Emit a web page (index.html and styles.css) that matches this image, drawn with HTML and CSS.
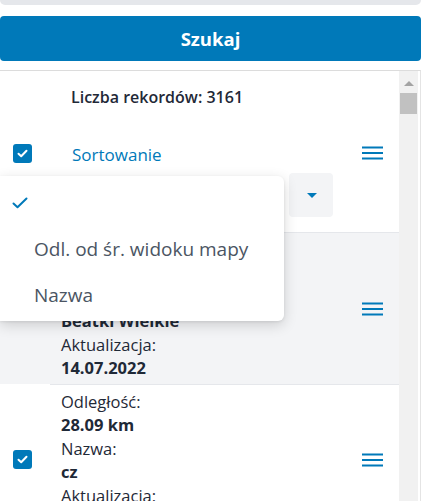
FILE: index.html
```html
<!DOCTYPE html>
<html lang="pl">
<head>
<meta charset="utf-8">
<link rel="stylesheet" href="styles.css">
</head>
<body>
<div class="page">
  <div class="top-bar"></div>
  <button class="search">Szukaj</button>
  <div class="panel">
    <div class="list">
      <div class="count">Liczba rekordów: 3161</div>
      <div class="sort-row">
        <div class="cb-cell"><span class="checkbox"><svg width="19" height="19" viewBox="0 0 19 19"><path d="M5.5 9.8 L8.2 12.3 L13.5 6.8" fill="none" stroke="#fff" stroke-width="2" stroke-linecap="round" stroke-linejoin="round"/></svg></span></div>
        <div class="sort-label">Sortowanie</div>
        <div class="menu-cell"><svg class="burger" width="21" height="14" viewBox="0 0 21 14"><rect x="0" y="0.5" width="21" height="2" fill="#0079b9"/><rect x="0" y="6" width="21" height="2" fill="#0079b9"/><rect x="0" y="11.5" width="21" height="2" fill="#0079b9"/></svg></div>
      </div>
      <div class="select-row">
        <div class="select">
          <div class="select-field"></div>
          <div class="select-toggle"><span class="caret"></span></div>
        </div>
      </div>
      <div class="item gray">
        <div class="cb-cell"><span class="checkbox"><svg width="19" height="19" viewBox="0 0 19 19"><path d="M5.5 9.8 L8.2 12.3 L13.5 6.8" fill="none" stroke="#fff" stroke-width="2" stroke-linecap="round" stroke-linejoin="round"/></svg></span></div>
        <div class="item-body">
          <div class="content">
            <div class="lbl">Odległość:</div>
            <div class="val">27.51 km</div>
            <div class="lbl">Nazwa:</div>
            <div class="val">Beatki Wielkie</div>
            <div class="lbl">Aktualizacja:</div>
            <div class="val">14.07.2022</div>
          </div>
          <div class="menu-cell"><svg class="burger" width="21" height="14" viewBox="0 0 21 14"><rect x="0" y="0.5" width="21" height="2" fill="#0079b9"/><rect x="0" y="6" width="21" height="2" fill="#0079b9"/><rect x="0" y="11.5" width="21" height="2" fill="#0079b9"/></svg></div>
        </div>
      </div>
      <div class="item">
        <div class="cb-cell"><span class="checkbox"><svg width="19" height="19" viewBox="0 0 19 19"><path d="M5.5 9.8 L8.2 12.3 L13.5 6.8" fill="none" stroke="#fff" stroke-width="2" stroke-linecap="round" stroke-linejoin="round"/></svg></span></div>
        <div class="item-body bordered">
          <div class="content">
            <div class="lbl">Odległość:</div>
            <div class="val">28.09 km</div>
            <div class="lbl">Nazwa:</div>
            <div class="val">cz</div>
            <div class="lbl">Aktualizacja:</div>
            <div class="val">14.07.2022</div>
          </div>
          <div class="menu-cell"><svg class="burger" width="21" height="14" viewBox="0 0 21 14"><rect x="0" y="0.5" width="21" height="2" fill="#0079b9"/><rect x="0" y="6" width="21" height="2" fill="#0079b9"/><rect x="0" y="11.5" width="21" height="2" fill="#0079b9"/></svg></div>
        </div>
      </div>
    </div>
    <div class="scrollbar">
      <span class="arrow-up"></span>
      <span class="thumb"></span>
    </div>
    <div class="popover">
      <div class="opt"><svg width="16" height="12" viewBox="0 0 16 12"><path d="M1.5 6.5 L5.5 10.2 L14.5 1.5" fill="none" stroke="#0079b9" stroke-width="2" stroke-linecap="round" stroke-linejoin="round"/></svg></div>
      <div class="opt text">Odl. od śr. widoku mapy</div>
      <div class="opt text">Nazwa</div>
    </div>
  </div>
</div>
</body>
</html>
```

FILE: styles.css
```css
html, body {
  margin: 0;
  padding: 0;
  background: #fff;
}
body {
  height: 501px;
  overflow: hidden;
  font-family: "Open Sans", "Noto Sans", sans-serif;
  color: #1f2937;
}
.page {
  width: 421px;
  display: flex;
  flex-direction: column;
}
.top-bar {
  height: 5px;
  background: #e5e7eb;
  border-radius: 0 0 5px 5px;
}
.search {
  margin-top: 11px;
  height: 45px;
  border: none;
  border-radius: 4px;
  background: #0079b9;
  color: #fff;
  font-family: "Open Sans", "Noto Sans", sans-serif;
  font-weight: 700;
  font-size: 18.5px;
  padding: 0;
  width: 421px;
}
.panel {
  position: relative;
  margin-top: 9px;
  border-top: 1px solid #dcdcdc;
  border-right: 1px solid #e4e4e4;
  display: flex;
  height: 440px;
}
.list {
  width: 399px;
  display: flex;
  flex-direction: column;
}
.count {
  padding: 14px 0 0 71px;
  height: 25px;
  line-height: 24px;
  font-size: 16px;
  font-weight: 600;
}
.sort-row {
  margin-top: 30px;
  height: 30px;
  display: flex;
  align-items: center;
}
.cb-cell {
  width: 50px;
  flex: none;
  display: flex;
  padding-left: 13px;
  box-sizing: border-box;
}
.checkbox {
  width: 19px;
  height: 19px;
  border-radius: 3px;
  background: #0079b9;
  display: block;
}
.checkbox svg {
  display: block;
}
.sort-label {
  flex: 1;
  padding-left: 22px;
  color: #0079b9;
  font-size: 17px;
  line-height: 24px;
  padding-top: 4px;
}
.menu-cell {
  flex: none;
  width: 37px;
  display: flex;
  align-items: center;
}
.burger {
  display: block;
}
.select-row {
  padding: 6px 0 15px 72px;
  border-bottom: 1px solid #e5e7eb;
}
.select {
  display: flex;
  gap: 5px;
  height: 44px;
}
.select-field {
  width: 212px;
}
.select-toggle {
  width: 44px;
  background: #f3f4f6;
  border-radius: 4px;
  display: flex;
  align-items: center;
  justify-content: center;
}
.caret {
  width: 0;
  height: 0;
  border-left: 5px solid transparent;
  border-right: 5px solid transparent;
  border-top: 5px solid #0079b9;
  margin-left: 1px;
}
.item {
  display: flex;
  align-items: center;
}
.item.gray {
  background: #f3f4f6;
}
.item-body {
  flex: 1;
  display: flex;
  align-items: center;
  align-self: stretch;
}
.item-body.bordered {
  border-top: 1px solid #e5e7eb;
}
.content {
  flex: 1;
  padding: 6px 0 4px 11px;
  font-size: 16.5px;
}
.bordered .content {
  padding-top: 5px;
}
.content .lbl {
  height: 23px;
  line-height: 23px;
}
.content .val {
  height: 24px;
  line-height: 24px;
  font-weight: 700;
}
.scrollbar {
  width: 19px;
  background: #f1f1f1;
  display: flex;
  flex-direction: column;
  align-items: center;
}
.arrow-up {
  margin-top: 10px;
  width: 0;
  height: 0;
  border-left: 5px solid transparent;
  border-right: 5px solid transparent;
  border-bottom: 5px solid #a3a3a3;
}
.thumb {
  margin-top: 7px;
  width: 17px;
  height: 21px;
  background: #c1c1c1;
}
.popover {
  position: absolute;
  left: 0;
  top: 105px;
  width: 284px;
  height: 145px;
  box-sizing: border-box;
  padding-top: 4px;
  background: #fff;
  border-radius: 0 6px 6px 0;
  box-shadow: 0 4px 14px rgba(0, 0, 0, 0.16), 0 1px 3px rgba(0, 0, 0, 0.08);
  font-family: "Open Sans", "Noto Sans", sans-serif;
}
.opt {
  height: 46px;
  display: flex;
  align-items: center;
  padding-left: 12px;
}
.opt svg {
  display: block;
}
.opt.text {
  padding-left: 34px;
  font-size: 19px;
  color: #4b5563;
}
```
